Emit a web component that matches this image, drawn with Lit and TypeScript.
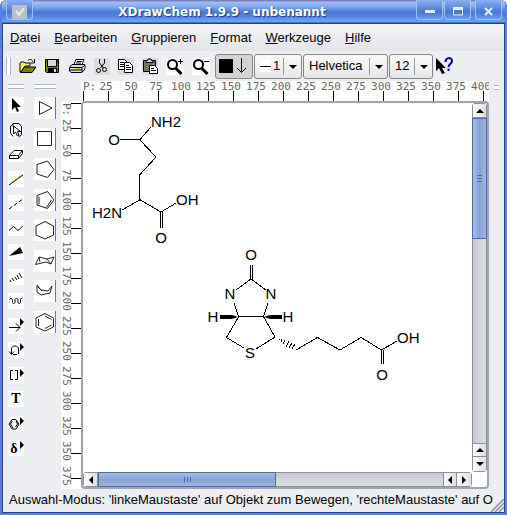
import { LitElement, html, svg, css } from "lit";
import { customElement } from "lit/decorators.js";

const menus = ["Datei", "Bearbeiten", "Gruppieren", "Format", "Werkzeuge", "Hilfe"];

const files: [string, string, unknown][] = [
  ["Öffnen", "open", svg`<path d="M1 14V5l1-1h3l1 1h5v3H6l-4 6z" fill="#ff6" stroke="#000"/><path d="M1.5 14.5 5.5 9H17l-4 5.5z" fill="#808000" stroke="#000"/><path d="M9 2.5c2-2 4-1 5 1.5M15.5 1v4h-4" fill="none" stroke="#000"/>`],
  ["Speichern", "save", svg`<path d="M1.5 1.5h13v13h-12l-1-1z" fill="#808000" stroke="#000"/><path d="M4 2h8v6H4z" fill="#d8d8d8"/><path d="M3.5 2v6.5h9V2M13 3h1" fill="none" stroke="#000"/><path d="M4 10h9v5H4z" fill="#000"/><path d="M10 11h2v3h-2z" fill="#ddd"/>`],
  ["Drucken", "print", svg`<path d="M5 6.5 7 1.5h8L13 6.5z" fill="#fff" stroke="#000"/><path d="M8 3.5h5M7 5h5" stroke="#000"/><path d="M.5 9.5 3 6.5h13V11l-3 3.5H2L.5 13z" fill="#ddd" stroke="#000"/><path d="M1 9.5h12L16 7M13 10v4M1 12h12" fill="none" stroke="#000"/><path d="M7 10.5h4" stroke="#cc0" stroke-width="1"/>`],
  ["Ausschneiden", "cut grey", svg`<path d="M5.5 1v4l4 5M10.5 1v4l-4 5" fill="none" stroke="#000"/><circle cx="4.500" cy="12.500" r="2" fill="none" stroke="#000"/><circle cx="10.500" cy="11.500" r="2" fill="none" stroke="#000"/>`],
  ["Kopieren", "copy grey", svg`<path d="M.5 1.500h6l3 3v7h-9z" fill="#fff" stroke="#000"/><path d="M2 4.500h4M2 6.500h4M2 8.500h4" stroke="#000"/><path d="M6.500 4.500h5l3 3v7h-8z" fill="#fff" stroke="#000"/><path d="M8 7.500h3M8 9.500h5M8 11.500h5" stroke="#000"/>`],
  ["Einfügen", "paste grey", svg`<path d="M1.500 2.500h12v11h-12z" fill="#777766" stroke="#000"/><path d="M4 4.500h7V2.500H9.500L9 1H6l-.5 1.500H4z" fill="#ccc" stroke="#000"/><path d="M7.500 7.500h5l3 3v5h-8z" fill="#fff" stroke="#000"/><path d="M9 10.500h3M9 12.500h5" stroke="#000"/>`],
  ["Vergrößern", "zoom", svg`<circle cx="6.500" cy="6.500" r="4.500" fill="#fff" stroke="#000" stroke-width="2"/><path d="m9.500 10 6 6" stroke="#000" stroke-width="3"/><path d="M12 3.500h5M14.500 1v5" stroke="#000"/>`],
  ["Verkleinern", "zoom", svg`<circle cx="6.500" cy="6.500" r="4.500" fill="#fff" stroke="#000" stroke-width="2"/><path d="m9.500 10 6 6" stroke="#000" stroke-width="3"/><path d="M12 3.500h5" stroke="#000"/>`],
];

const fly = svg`<path d="m12 1 4 4-4 4z" fill="#000"/>`;
const line = (d: string, w = 1) => svg`<path d=${d} fill="none" stroke="#000" stroke-width=${w}/>`;

const tools: [string, unknown][] = [
  ["Auswählen", svg`<path d="M4 1v12l3-3 2 5 2-1-2-4h4z" fill="#000"/>`],
  ["Lasso", svg`${line("M2.5 4.500 5 1.500h6l2.500 3v8L11 15.500M2.500 4v7L5 14.500M5 1.500v3")}<path d="M5.500 4v8l2-2 2 4 1.500-.5-1.500-4h3z" fill="#fff" stroke="#000"/>`],
  ["Radierer", svg`<path d="M1.500 9.500 6 4.500h8.500v3l-4 5h-9z" fill="#fff" stroke="#000"/>${line("M1.500 9.500h9l4-5M10.500 9.500v3")}`],
  ["Bindung", svg`${line("M1 14 15 4")}<path d="M4 11 13 4.500" stroke="#bb0"/>`],
  ["Gestrichelt", svg`<path d="M1 14 15 4" stroke="#000" stroke-dasharray="4 2"/>`],
  ["Kette", line("m1 10.500 4.500-4 4.500 4 4.500-4")],
  ["Keil", svg`<path d="M1 12 12 3l3 6z" fill="#000"/>`],
  ["Keil gestrichelt", line("m2 11 1 2M4 9l2 3M7 8l2 3M9 6l2 4M11 4l3 5")],
  ["Wellen", line("M1.500 7c0-2 3-2 3 0v2c0 2 2.500 2 2.500 0V7c0-2 3-2 3 0v2c0 2 2.500 2 2.500 0V7c0-1 1-2 2-2")],
  ["Pfeil", svg`${line("M1 9.500h11M8 5.500l4 4-4 4")}<path d="m12 0 4 4-4 4z"/>`],
  ["Gebogener Pfeil", svg`${line("M5 12.500h4M10.500 12V7c0-4-7-4-7 0v5M1 9.500l2.500 3 2.500-3")}${fly}`],
  ["Klammern", svg`${line("M5 3.500H2.500v9H5M7 3.500h2.500v9H7")}<path d="m12 2 4 4-4 4z"/>`],
  ["Text", svg`<text x="8" y="12" text-anchor="middle" class="glyph">T</text>`],
  ["Ring", svg`${line("M4 3.500h4l3 4.500-3 5H4L1 8zM4 5.500 2.500 8 5 12M8 5 9.500 8 7.500 11")}${fly}`],
  ["Symbol", svg`<text x="6" y="13" text-anchor="middle" class="glyph">δ</text>${fly}`],
];

const ring = (d: string) => svg`<path d=${d} fill="none" stroke="#222"/>`;
const rings: [string, unknown][] = [
  ["Dreieck", ring("M5.500 4.500v13L18 11z")],
  ["Quadrat", ring("M3.500 3.500h14v14h-14z")],
  ["Fünfring", ring("M3 6.500 13.500 3l6.500 8.500-6.500 8L3 16z")],
  ["Cyclopentadien", ring("M3 6.500 13.500 2.500l6.500 8.500-6.500 8.500L3 16zM5 7.500v7.500M17.500 11l-5 7.500")],
  ["Sechsring", ring("M11 2.500 19.500 7v9L11 20l-9-4V7z")],
  ["Sessel", ring("M1.500 14.500 5 7l8 2 7-2-3 7-5-2zM5 7l1 5M13 9l4 5")],
  ["Boot", ring("m3 5 4 5 7 1 4-5-2 7-9 2-4-3zM4 7l4 4")],
  ["Benzol", ring("M11 2.500 19.500 7v9L11 20l-9-4V7zM4.500 8v7M11 5l6.500 3.500M11 17.500l6.500-3.500")],
];

const ticks = (n: number) => Array.from({ length: n }, (_, i) => (i ? String(i * 25) : "P:"));

const bonds = [
  "M120 139.500h20M140 139.500 151 127M140 140l16 17-16.500 18v25L122 210M139.500 199.500 161 212l15-9M160.500 212v16M162.500 212v16",
  "M250.500 265v14M252.500 265v14M236 290l15-11 15 11M234 303l4.500 13.500h25L268 303M238.500 317l-12 20.500 17.500 10.500M256 349l19-12-11.500-20.500",
  "M279 339v1M282 339l-1 3M285 340l-2 4M289 341l-3 6M292 343l-3 5M295 344l-3 5M296 350l21.500-12.500L340 350l21-12.500 20.500 12.500 15.500-9M381.500 350v14M383.500 350v14",
];
const atoms: [number, number, string, string][] = [
  [151, 127, "NH2", "start"], [114, 145, "O", "middle"], [122, 218, "H2N", "end"],
  [176, 205, "OH", "start"], [161, 243, "O", "middle"], [251, 260, "O", "middle"],
  [230, 299, "N", "middle"], [271, 299, "N", "middle"], [213, 322, "H", "middle"],
  [288, 322, "H", "middle"], [250, 358, "S", "middle"], [397, 343, "OH", "start"],
  [382, 380, "O", "middle"],
];

@customElement("app-root")
export class AppRoot extends LitElement {
  static styles = css`
    :host {
      display: flex;
      flex-direction: column;
      box-sizing: border-box;
      height: 100vh;
      overflow: hidden;
      font: 13px/16px "Liberation Sans", Arial, sans-serif;
      color: #000;
      background: #edeef2;
      border: 2px solid #5a7fdc;
      border-top: 0;
      border-radius: 6px 6px 0 0;
      cursor: default;
    }
    * { box-sizing: border-box; }
    button {
      appearance: none; border: 0; padding: 0; margin: 0;
      background: none; color: inherit; font: inherit; flex: none;
    }
    svg { display: block; }
    .title {
      flex: none; height: 24px; display: flex; align-items: stretch;
      padding: 0 3px 0 4px;
      background: linear-gradient(#7b7fbd 0 1px, #a3bff4 2px, #7da6f0 7px, #4a7ad2 12px, #4c80dc 15px, #6ea5fb 22px, #24407f 23px);
    }
    .title h1 {
      flex: 1; margin: 0; padding-right: 4px; text-align: center;
      font: bold 12px/24px "DejaVu Sans", sans-serif;
      color: #fff; text-shadow: 1px 1px 1px #223a78;
    }
    .win {
      width: 27px; height: 20px; margin-left: 1px; display: grid; place-items: center;
      padding-top: 4px;
      border: 1px solid #a5c0f8; border-top: 0; border-radius: 0 0 4px 4px;
      background: linear-gradient(#8aaff3, #4678d2 12px, #6a9cf2);
    }
    .win:last-child { margin-left: 4px; }
    .app { width: 27px; margin: 0; }
    .frame {
      flex: 1; min-height: 0; display: flex; flex-direction: column;
      border: 1px solid #2b4480; border-top: 0;
    }
    .menu {
      flex: none; display: flex; gap: 14px; padding: 5px 7px; height: 27px;
      background: linear-gradient(#f3f4f7, #e4e5ea);
    }
    .menu button::first-letter { text-decoration: underline; }
    .bar { flex: none; display: flex; align-items: center; height: 30px; padding: 0 3px; }
    .grip { flex: none; border: solid #aeb6c6; background: #fff; }
    .grip.v { width: 5px; height: 18px; border-width: 0 1px; margin-right: 8px; }
    .grip.h { height: 5px; border-width: 1px 0; margin-bottom: 8px; }
    .file { width: 17px; height: 17px; margin-right: 8px; }
    .file.zoom { width: 18px; background: #fff; }
    .file.zoom + .zoom { margin-right: 5px; }
    .file.grey { background: #dcdcdc; width: 16px; }
    .box {
      flex: none; height: 25px; display: flex; align-items: center; position: relative;
      border: 1px solid #858585; border-radius: 3px; margin-right: 1px;
      background: linear-gradient(#fafafa, #e6e6e8);
    }
    .box.color { width: 38px; background: #d3d3d3; padding-left: 2px; }
    .box.color svg { width: 32px; height: 18px; }
    .box.width { width: 48px; }
    .box.family { width: 85px; }
    .box.size { width: 44px; }
    .box select {
      appearance: none; border: 0; background: none; width: 100%; height: 100%;
      padding: 0 0 0 5px; margin: 0; font: inherit; color: inherit; outline: 0;
    }
    .box.width select { padding-left: 2px; }
    .dash { flex: none; width: 11px; height: 12px; margin-left: 5px; background: #fff; display: grid; align-items: center; }
    .dash::before { content: ""; height: 1px; background: #000; }
    .drop { position: absolute; right: 0; top: 3px; width: 18px; height: 17px; pointer-events: none; border-left: 1px solid #999; }
    .help { margin-left: 2px; }
    .work { flex: 1; min-height: 0; display: flex; }
    .side { flex: none; display: flex; flex-direction: column; padding-top: 3px; }
    .side.a { width: 16px; margin-left: 5px; }
    .side.b { width: 22px; margin: 0 5px 0 10px; }
    .side button { background: #fff; }
    .side.a button { height: 16px; margin-bottom: 8px; }
    .side.a button:nth-of-type(odd) { margin-bottom: 9px; }
    .side.b button { height: 22px; margin-bottom: 8px; border-right: 1px solid #777; }
    .side.b button:nth-of-type(odd) { margin-bottom: 9px; }
    .glyph { font: bold 14px "Liberation Serif", serif; }
    .sheet {
      flex: 1; min-width: 0; display: grid;
      grid-template: 20px minmax(0, 1fr) / 20px minmax(0, 1fr);
    }
    .ruler { display: flex; background: #fff; font: 11px/10px "DejaVu Sans Mono", monospace; color: #666; }
    .ruler.x { grid-column: 2; padding-left: 2px; overflow: hidden; }
    .ruler.y { grid-column: 1; flex-direction: column; padding-top: 2px; }
    .mark { flex: none; display: flex; }
    .x .mark { width: 25px; flex-direction: column; }
    .y .mark { height: 25px; }
    .x .mark span { width: 26px; height: 10px; margin-left: -15px; padding-top: 1px; text-align: center; white-space: nowrap; }
    .y .mark span { writing-mode: vertical-rl; height: 26px; width: 10px; margin-top: -15px; text-align: center; white-space: nowrap; }
    .x .mark:first-child span { margin-left: 0; text-align: left; }
    .y .mark:first-child span { margin-top: 0; text-align: left; }
    .mark i { background: #000; }
    .x .mark i { width: 1px; height: 10px; }
    .y .mark i { width: 10px; height: 1px; }
    .view {
      min-height: 0; display: grid; background: #fff;
      grid-template: minmax(0, 1fr) 15px / minmax(0, 1fr) 15px;
      border: 2px solid #9ea4b0; border-radius: 4px;
    }
    .paper { overflow: hidden; }
    .bond { fill: none; stroke: #000; shape-rendering: crispEdges; }
    .atom { font-size: 15px; }
    .scroll { display: flex; border: 1px solid #8d8f96; border-radius: 3px; }
    .scroll.v { flex-direction: column; background: linear-gradient(90deg, #c5c8d0, #dcdee4); }
    .scroll.h { background: linear-gradient(#c5c8d0, #dcdee4); }
    .scroll button { display: grid; place-items: center; background: linear-gradient(90deg, #fdfdfd, #dedede); }
    .v button { width: 13px; height: 14px; border-bottom: 1px solid #8d8f96; }
    .h button { width: 14px; height: 13px; border-right: 1px solid #8d8f96; }
    .v .gap + button { border-top: 1px solid #8d8f96; }
    .h .gap + button { border-left: 1px solid #8d8f96; }
    .v button:last-child { border-bottom: 0; }
    .h button:last-child { border-right: 0; }
    .thumb { display: grid; place-items: center; border: 1px solid #4b68a2; }
    .v .thumb { height: 33%; margin: 0 -1px; background: linear-gradient(90deg, #a6bce6, #86a2d6 50%, #9db6e2); }
    .h .thumb { width: 46%; margin: -1px 0; background: linear-gradient(#a6bce6, #86a2d6 50%, #9db6e2); }
    .gap { flex: 1; }
    .right { flex: none; width: 15px; display: flex; flex-direction: column; padding: 4px 5px; }
    .status { flex: none; height: 23px; display: flex; padding: 3px 0 0 6px; }
    .status p { flex: 1; margin: 0; min-width: 0; overflow: hidden; white-space: nowrap; }
    .status svg { flex: none; align-self: flex-end; margin-left: -6px; }
  `;

  private arrow(d: string) {
    return html`<svg width="8" height="8" viewBox="0 0 8 8"><path d=${d} /></svg>`;
  }

  private combo(kind: string, label: string, value: string) {
    return html`<div class="box ${kind}">
      ${kind === "width" ? html`<span class="dash"></span>` : ""}
      <select aria-label=${label}><option>${value}</option></select>
      <svg class="drop" viewBox="0 0 17 17"><path d="M5 7h8l-4 4z" /></svg>
    </div>`;
  }

  private ruler(axis: string, n: number) {
    return html`<div class="ruler ${axis}">
      ${ticks(n).map((t) => html`<div class="mark"><span>${t}</span><i></i></div>`)}
    </div>`;
  }

  render() {
    const up = "M0 6h8L4 2z", down = "M0 2h8L4 6z", left = "M6 0v8L2 4z", right = "M2 0v8l4-4z";
    return html`
      <header class="title">
        <button class="win app" aria-label="Fenstermenü">
          <svg width="15" height="14"><rect width="15" height="14" rx="1" fill="#b9bfc6" /><path d="m4 6 3 4 5-7" fill="none" stroke="#e9ebee" stroke-width="2" /></svg>
        </button>
        <h1>XDrawChem 1.9.9 - unbenannt</h1>
        <button class="win" aria-label="Minimieren"><svg width="12" height="10"><path d="M1 3h10v3H1z" fill="#e8effd" /></svg></button>
        <button class="win" aria-label="Maximieren"><svg width="12" height="10"><path d="M1.500 1v7h9V1z" fill="none" stroke="#e8effd" /><path d="M1 0h10v3H1z" fill="#e8effd" /></svg></button>
        <button class="win" aria-label="Schließen"><svg width="12" height="10"><path d="m2 1 7 7M9 1 2 8" stroke="#e8effd" stroke-width="2" /></svg></button>
      </header>
      <div class="frame">
        <nav class="menu">${menus.map((m) => html`<button>${m}</button>`)}</nav>
        <div class="bar">
          <span class="grip v"></span>
          ${files.map(([l, k, i]) => html`<button class="file ${k}" aria-label=${l}><svg viewBox="0 0 18 17" width="18" height="17">${i}</svg></button>`)}
          <button class="box color" aria-label="Farbe">
            <svg viewBox="0 0 32 18"><path d="M1 2h14v14H1z" /><path d="M23.500 1v14M19 11l4.500 4.500L28 11" fill="none" stroke="#000" /></svg>
          </button>
          ${this.combo("width", "Linienbreite", "1")}
          ${this.combo("family", "Schriftart", "Helvetica")}
          ${this.combo("size", "Schriftgröße", "12")}
          <button class="help" aria-label="Direkthilfe">
            <svg width="18" height="18"><path d="M0 1v13l3-3 3 6 3-1-3-5h4z" /><path d="M9.500 5c0-5 6.500-5 6.500-1 0 3-3.500 3-3.500 6M12.500 11.500v2.500" fill="none" stroke="#00008b" stroke-width="2" /></svg>
          </button>
        </div>
        <main class="work">
          <div class="side a"><span class="grip h"></span>
            ${tools.map(([l, i]) => html`<button aria-label=${l}><svg width="16" height="16">${i}</svg></button>`)}
          </div>
          <div class="side b"><span class="grip h"></span>
            ${rings.map(([l, i]) => html`<button aria-label=${l}><svg width="21" height="22">${i}</svg></button>`)}
          </div>
          <div class="sheet">
            ${this.ruler("x", 17)} ${this.ruler("y", 16)}
            <div class="view">
              <div class="paper">
                <svg width="388" height="369" viewBox="83 103 388 369">
                  ${bonds.map((d) => svg`<path class="bond" d=${d} />`)}
                  <path d="M220 315v4h12l6-2-6-2zM282 315v4h-12l-6-2 6-2z" />
                  ${atoms.map(([x, y, t, a]) => svg`<text class="atom" x=${x} y=${y} text-anchor=${a}>${t}</text>`)}
                </svg>
              </div>
              <div class="scroll v">
                <button aria-label="Nach oben">${this.arrow(up)}</button>
                <div class="thumb"><svg width="5" height="7"><path d="M0 .5h5M0 3.500h5M0 6.500h5" stroke="#4b68a2" /></svg></div>
                <div class="gap"></div>
                <button aria-label="Hoch">${this.arrow(up)}</button>
                <button aria-label="Nach unten">${this.arrow(down)}</button>
              </div>
              <div class="scroll h">
                <button aria-label="Nach links">${this.arrow(left)}</button>
                <div class="thumb"><svg width="7" height="5"><path d="M.5 0v5M3.500 0v5M6.500 0v5" stroke="#4b68a2" /></svg></div>
                <div class="gap"></div>
                <button aria-label="Links">${this.arrow(left)}</button>
                <button aria-label="Nach rechts">${this.arrow(right)}</button>
              </div>
            </div>
          </div>
          <div class="right"><span class="grip h"></span></div>
        </main>
        <footer class="status">
          <p>Auswahl-Modus: 'linkeMaustaste' auf Objekt zum Bewegen, 'rechteMaustaste' auf O</p>
          <svg width="13" height="13"><path d="M0 13 13 0M4 13l9-9M8 13l5-5" stroke="#8b8f9a" stroke-width="1.500" /></svg>
        </footer>
      </div>
    `;
  }
}
